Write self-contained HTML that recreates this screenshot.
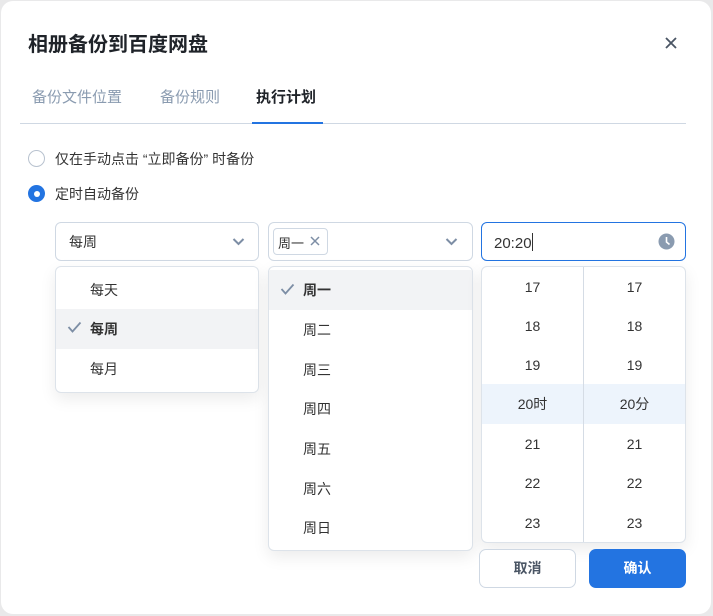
<!DOCTYPE html>
<html><head><meta charset="utf-8"><style>
*{box-sizing:border-box;margin:0;padding:0}
body{width:713px;height:616px;background:#e9e9ea;font-family:"Liberation Sans","Noto Sans CJK SC",sans-serif;color:#1f2329;position:relative;overflow:hidden}
.a{position:absolute}
.dlg{left:1px;top:1px;width:710px;height:613px;background:#fff;border-radius:12px}
.sel{height:39px;border:1px solid #cfd8e3;border-radius:6px;background:#fff}
.pop{background:#fff;border:1px solid #dde3ea;border-radius:6px;box-shadow:0 6px 16px rgba(0,0,0,.08)}
.it{position:absolute;left:0;right:0;height:40px;line-height:40px;font-size:14px;color:#333}
.tr{position:absolute;width:101px;height:40px;line-height:40px;text-align:center;font-size:14px;color:#333}
</style></head><body>
<div class="a dlg"></div>
<div class="a" style="left:28px;top:28px;font-size:20px;font-weight:bold;color:#1f2329">相册备份到百度网盘</div>
<svg class="a" style="left:665px;top:37px" width="12" height="12" viewBox="0 0 12 12"><path d="M1 1L11 11M11 1L1 11" stroke="#4a5564" stroke-width="1.8" fill="none"/></svg>
<div class="a" style="left:32px;top:86px;font-size:15px;color:#8a9bb0">备份文件位置</div>
<div class="a" style="left:160px;top:86px;font-size:15px;color:#8a9bb0">备份规则</div>
<div class="a" style="left:256px;top:86px;font-size:15px;font-weight:bold;color:#1f2329">执行计划</div>
<div class="a" style="left:20px;top:123px;width:666px;height:1px;background:#cfd8e3"></div>
<div class="a" style="left:252px;top:122px;width:71px;height:2px;background:#2374e1"></div>
<div class="a" style="left:28px;top:150px;width:17px;height:17px;border:1.5px solid #b8c2cf;border-radius:50%"></div>
<div class="a" style="left:55px;top:149px;font-size:14px;color:#333">仅在手动点击 “立即备份” 时备份</div>
<div class="a" style="left:28px;top:185px;width:17px;height:17px;border-radius:50%;background:#2374e1"></div>
<div class="a" style="left:33.5px;top:190.5px;width:6px;height:6px;border-radius:50%;background:#fff"></div>
<div class="a" style="left:55px;top:184px;font-size:14px;color:#333">定时自动备份</div>

<div class="a sel" style="left:55px;top:222px;width:204px"></div>
<div class="a" style="left:69px;top:232px;font-size:14px;color:#333">每周</div>
<svg class="a" style="left:232px;top:237px" width="13" height="9" viewBox="0 0 13 9"><path d="M1.5 2L6.5 7L11.5 2" stroke="#7d8ea5" stroke-width="2" fill="none"/></svg>
<div class="a sel" style="left:268px;top:222px;width:205px"></div>
<div class="a" style="left:273px;top:228px;width:55px;height:27px;border:1px solid #cfd8e3;border-radius:4px"></div>
<div class="a" style="left:278px;top:233px;font-size:13px;color:#333">周一</div>
<svg class="a" style="left:310px;top:236px" width="10" height="10" viewBox="0 0 10 10"><path d="M1 1L9 9M9 1L1 9" stroke="#7d8ea5" stroke-width="1.5"/></svg>
<svg class="a" style="left:445px;top:237px" width="13" height="9" viewBox="0 0 13 9"><path d="M1.5 2L6.5 7L11.5 2" stroke="#7d8ea5" stroke-width="2" fill="none"/></svg>
<div class="a sel" style="left:481px;top:222px;width:205px;border-color:#2374e1"></div>
<div class="a" style="left:494px;top:233px;font-size:15px;color:#333">20:20<span style="display:inline-block;width:1px;height:18px;background:#333;vertical-align:-3px"></span></div>
<svg class="a" style="left:658px;top:233px" width="17" height="17" viewBox="0 0 17 17"><circle cx="8.5" cy="8.5" r="8" fill="#8a9bb0"/><path d="M8.5 4V9L11.5 11.5" stroke="#fff" stroke-width="1.6" fill="none"/></svg>

<div class="a pop" style="left:55px;top:266px;width:204px;height:127px">
<div class="it" style="top:3px;padding-left:34px">每天</div>
<div class="it" style="top:42px;padding-left:34px;background:#f2f3f5;font-weight:bold">每周</div>
<div class="it" style="top:82px;padding-left:34px">每月</div>
</div>
<svg class="a" style="left:67px;top:321px" width="15" height="12" viewBox="0 0 15 12"><path d="M1.5 6L5.5 10.5L13.5 1.5" stroke="#7d8ea5" stroke-width="1.8" fill="none"/></svg>

<div class="a pop" style="left:268px;top:266px;width:205px;height:285px">
<div class="it" style="top:3px;padding-left:34px;background:#f2f3f5;font-weight:bold">周一</div>
<div class="it" style="top:43px;padding-left:34px">周二</div>
<div class="it" style="top:83px;padding-left:34px">周三</div>
<div class="it" style="top:122px;padding-left:34px">周四</div>
<div class="it" style="top:162px;padding-left:34px">周五</div>
<div class="it" style="top:202px;padding-left:34px">周六</div>
<div class="it" style="top:241px;padding-left:34px">周日</div>
</div>
<svg class="a" style="left:280px;top:283px" width="15" height="12" viewBox="0 0 15 12"><path d="M1.5 6L5.5 10.5L13.5 1.5" stroke="#7d8ea5" stroke-width="1.8" fill="none"/></svg>

<div class="a pop" style="left:481px;top:266px;width:205px;height:277px;overflow:hidden">
<div class="a" style="left:0;top:117px;width:203px;height:40px;background:#edf4fc"></div>
<div class="a" style="left:101px;top:0;width:1px;height:277px;background:#d5dce5"></div>
<div class="tr" style="left:0;top:0">17</div><div class="tr" style="left:102px;top:0">17</div>
<div class="tr" style="left:0;top:39px">18</div><div class="tr" style="left:102px;top:39px">18</div>
<div class="tr" style="left:0;top:78px">19</div><div class="tr" style="left:102px;top:78px">19</div>
<div class="tr" style="left:0;top:117px">20时</div><div class="tr" style="left:102px;top:117px">20分</div>
<div class="tr" style="left:0;top:157px">21</div><div class="tr" style="left:102px;top:157px">21</div>
<div class="tr" style="left:0;top:196px">22</div><div class="tr" style="left:102px;top:196px">22</div>
<div class="tr" style="left:0;top:236px">23</div><div class="tr" style="left:102px;top:236px">23</div>
</div>

<div class="a" style="left:479px;top:549px;width:97px;height:39px;border:1px solid #cfd8e3;border-radius:7px;background:#fff;text-align:center;line-height:37px;font-size:14px;font-weight:bold;color:#4a5564">取消</div>
<div class="a" style="left:589px;top:549px;width:97px;height:39px;border-radius:7px;background:#2374e1;text-align:center;line-height:39px;font-size:14px;font-weight:bold;color:#fff">确认</div>
</body></html>
